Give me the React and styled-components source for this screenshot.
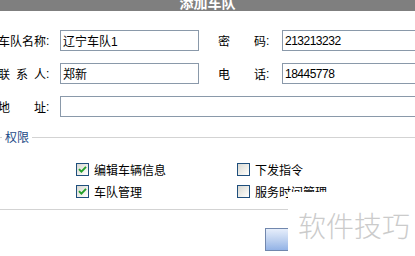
import React from 'react';
import styled, { createGlobalStyle } from 'styled-components';

const GlobalStyle = createGlobalStyle`
  html, body {
    margin: 0;
    padding: 0;
    background: #fff;
  }
  body {
    width: 415px;
    height: 256px;
    overflow: hidden;
    font-family: "Liberation Sans", "Noto Sans CJK SC", sans-serif;
    font-size: 12px;
    color: #000;
  }
`;

const Viewport = styled.div`
  position: relative;
  width: 415px;
  height: 256px;
  overflow: hidden;
`;

const Dialog = styled.div`
  width: 450px;
`;

const TitleBar = styled.div`
  width: 415px;
  height: 11px;
  background: #7f7f7f;
  overflow: hidden;
  display: flex;
  justify-content: center;
`;

const TitleText = styled.span`
  display: block;
  margin-top: -5px;
  color: #fff;
  font-size: 14px;
  font-weight: bold;
  line-height: 14px;
  font-family: "Noto Sans CJK SC", sans-serif;
`;

const Form = styled.div`
  display: flex;
  flex-direction: column;
  gap: 12px;
  padding-top: 19px;
`;

const Row = styled.div`
  display: flex;
  align-items: center;
  height: 21px;
`;

const Field = styled.div`
  display: flex;
  align-items: center;
  margin-left: ${p => p.$offset || 0}px;
  flex: ${p => (p.$grow ? 1 : 'none')};
`;

const Label = styled.span`
  width: 48px;
  text-align: justify;
  text-align-last: justify;
  font-family: "Noto Sans CJK SC", sans-serif;
  font-size: 12px;
  line-height: 14px;
`;

const Colon = styled.span`
  width: 4px;
  font-size: 12px;
  line-height: 14px;
`;

const Input = styled.div`
  box-sizing: border-box;
  height: 21px;
  width: ${p => (p.$width ? `${p.$width}px` : 'auto')};
  flex: ${p => (p.$width ? 'none' : 1)};
  margin-left: ${p => p.$gap}px;
  border: 1px solid #8a99aa;
  border-right: ${p => (p.$width ? '1px solid #8a99aa' : 'none')};
  background: #fff;
  padding: 0 2px;
  display: flex;
  align-items: center;
  font-size: 12px;
  letter-spacing: ${p => (p.$digits ? '-0.5px' : '0')};
  white-space: nowrap;
`;

const Fieldset = styled.fieldset`
  margin: 13px 0 0 -10px;
  padding: 14px 0 7px 0;
  border: 1px solid #d3d3d3;
  min-width: 0;
`;

const Legend = styled.legend`
  margin-left: 11px;
  padding: 0 3px;
  color: #1d4a86;
  font-family: "Noto Sans CJK SC", sans-serif;
  font-size: 12px;
  line-height: 14px;
`;

const Grid = styled.div`
  display: grid;
  grid-template-columns: 161px auto;
  grid-auto-rows: 22px;
  padding-left: 85px;
`;

const Option = styled.label`
  display: flex;
  align-items: center;
  gap: 5px;
  font-family: "Noto Sans CJK SC", sans-serif;
  font-size: 12px;
`;

const Box = styled.span`
  box-sizing: border-box;
  width: 13px;
  height: 13px;
  border: 1px solid #1f4f7d;
  background: linear-gradient(135deg, #d8d8d2 0%, #f4f4f0 70%, #ffffff 100%);
  display: flex;
  align-items: center;
  justify-content: center;
`;

const ButtonBar = styled.div`
  display: flex;
  padding-left: 265px;
  margin-top: 18px;
`;

const Button = styled.div`
  box-sizing: border-box;
  width: 75px;
  height: 23px;
  border: 1px solid #7187ad;
  background: linear-gradient(180deg, #e6eefb 0%, #bfd2f0 50%, #93b3e6 100%);
`;

const Watermark = styled.div`
  position: absolute;
  left: 288px;
  top: 192px;
  right: 0;
  bottom: 0;
  background: #fff;
  padding: 18px 0 0 10px;
`;

const WatermarkText = styled.span`
  display: block;
  color: #cbcbcb;
  font-family: "Noto Sans CJK SC", sans-serif;
  font-size: 28px;
  line-height: 30px;
  font-weight: 300;
  white-space: nowrap;
`;

const Check = ({ checked }) => (
  <Box>
    {checked && (
      <svg width="9" height="9" viewBox="0 0 9 9">
        <path d="M1 4.2 L3.4 6.6 L8 1.8" fill="none" stroke="#22a02a" strokeWidth="1.9" />
      </svg>
    )}
  </Box>
);

const options = [
  { text: '编辑车辆信息', checked: true },
  { text: '下发指令', checked: false },
  { text: '车队管理', checked: true },
  { text: '服务时间管理', checked: false },
];

export default function App() {
  return (
    <>
      <GlobalStyle />
      <Viewport>
        <Dialog>
          <TitleBar>
            <TitleText>添加车队</TitleText>
          </TitleBar>
          <Form>
            <Row>
              <Field $offset={-2}>
                <Label>车队名称</Label>
                <Colon>:</Colon>
                <Input $width={139} $gap={10}>辽宁车队1</Input>
              </Field>
              <Field $offset={19} $grow>
                <Label>密码</Label>
                <Colon>:</Colon>
                <Input $gap={12} $digits>213213232</Input>
              </Field>
            </Row>
            <Row>
              <Field $offset={-2}>
                <Label>联系人</Label>
                <Colon>:</Colon>
                <Input $width={139} $gap={10}>郑新</Input>
              </Field>
              <Field $offset={19} $grow>
                <Label>电话</Label>
                <Colon>:</Colon>
                <Input $gap={12} $digits>18445778</Input>
              </Field>
            </Row>
            <Row>
              <Field $offset={-2} $grow>
                <Label>地址</Label>
                <Colon>:</Colon>
                <Input $gap={10} />
              </Field>
            </Row>
          </Form>
          <Fieldset>
            <Legend>权限</Legend>
            <Grid>
              {options.map(o => (
                <Option key={o.text}>
                  <Check checked={o.checked} />
                  {o.text}
                </Option>
              ))}
            </Grid>
          </Fieldset>
          <ButtonBar>
            <Button />
          </ButtonBar>
        </Dialog>
        <Watermark>
          <WatermarkText>软件技巧</WatermarkText>
        </Watermark>
      </Viewport>
    </>
  );
}
